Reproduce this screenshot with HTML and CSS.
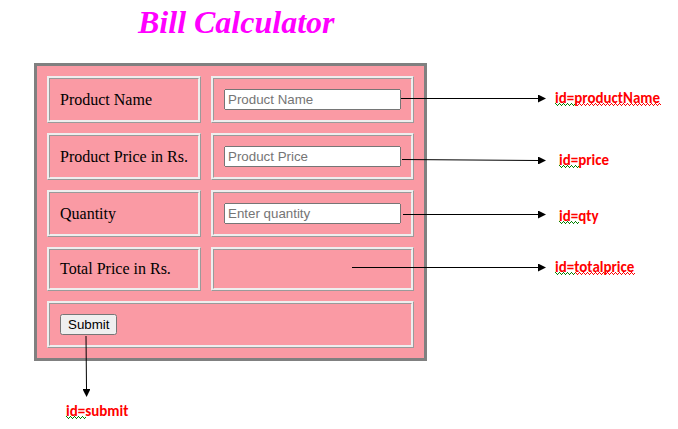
FILE: index.html
```html
<!DOCTYPE html>
<html lang="en">
<head>
<meta charset="utf-8">
<title>Bill Calculator</title>
<link rel="stylesheet" href="styles.css">
</head>
<body>
<main class="page">
  <h1 class="title">Bill Calculator</h1>
  <div class="diagram">
    <form class="bill">
      <table class="bill-table">
        <tr><td><label for="productName">Product Name</label></td><td><input type="text" id="productName" placeholder="Product Name"></td></tr>
        <tr><td><label for="price">Product Price in Rs.</label></td><td><input type="text" id="price" placeholder="Product Price"></td></tr>
        <tr><td><label for="qty">Quantity</label></td><td><input type="text" id="qty" placeholder="Enter quantity"></td></tr>
        <tr><td>Total Price in Rs.</td><td id="totalprice"></td></tr>
        <tr><td colspan="2"><button type="button" id="submit">Submit</button></td></tr>
      </table>
    </form>
    <div class="notes">
      <span class="note">id=productName</span>
      <span class="note note-inset">id=price</span>
      <span class="note note-inset">id=qty</span>
      <span class="note">id=totalprice</span>
    </div>
    <span class="note note-submit">id=submit</span>
    <svg class="arrows" width="644" height="366" viewBox="34 63 644 366" aria-hidden="true">
      <defs>
        <marker id="head" markerUnits="userSpaceOnUse" markerWidth="8" markerHeight="8" refX="0" refY="4" orient="auto"><path d="M0 0L8 4L0 8Z"/></marker>
        <pattern id="green" width="4" height="3" patternUnits="userSpaceOnUse"><path d="M0 0h1v1h-1zM1 1h1v1h-1zM2 2h1v1h-1zM3 1h1v1h-1z" class="wave-green"/></pattern>
        <pattern id="red" width="4" height="3" patternUnits="userSpaceOnUse"><path d="M0 0h1v1h-1zM1 1h1v1h-1zM2 2h1v1h-1zM3 1h1v1h-1z" class="wave-red"/></pattern>
        <rect id="short-wave" width="20" height="3" fill="url(#green)"/>
      </defs>
      <g class="lines">
        <path d="M401 98.5H538"/>
        <path d="M402 159.5L538 160.5"/>
        <path d="M403 214.5H538"/>
        <path d="M352 267.5H538"/>
        <path d="M86 336L86.5 389"/>
      </g>
      <use href="#short-wave" transform="translate(555 103)"/>
      <use href="#short-wave" transform="translate(559 165)"/>
      <use href="#short-wave" transform="translate(559 221)"/>
      <use href="#short-wave" transform="translate(555 272)"/>
      <use href="#short-wave" transform="translate(66 416)"/>
      <rect width="86" height="3" fill="url(#red)" transform="translate(575 103)"/>
      <rect width="60" height="3" fill="url(#red)" transform="translate(575 272)"/>
    </svg>
  </div>
</main>
</body>
</html>
```
FILE: styles.css
```css
body {
  margin: 0;
  background: #fff;
  font: 16px "Liberation Serif", serif;
  color: #000;
}

.page {
  padding: 4px 0 0 34px;
}

.title {
  margin: 0 0 22px;
  padding-left: 104px;
  font-size: 32px;
  line-height: 37px;
  font-style: italic;
  color: #f0f;
}

.diagram {
  position: relative;
  display: grid;
  grid-template-columns: max-content 1fr;
  column-gap: 128px;
}

.bill-table {
  border: 3px solid #808080;
  border-spacing: 10px;
  background: #fa9aa4;
}

.bill-table td {
  border: 3px ridge #eee;
  padding: 10px;
}

.bill-table input,
.bill-table button {
  display: block;
  box-sizing: border-box;
  height: 21px;
  margin: 0;
  font-family: "Liberation Sans", sans-serif;
}

.bill-table input {
  width: 177px;
  padding: 1px 2px;
}

.notes {
  display: grid;
  grid-template-rows: 62px 56px 51px 20px;
  align-content: start;
  padding-top: 25px;
}

.note {
  font: bold 15px/20px Carlito, Lato, sans-serif;
  color: #f00;
}

.note-inset {
  padding-left: 4px;
}

.note-submit {
  grid-column: 1;
  margin-top: 40px;
  padding-left: 32px;
}

.arrows {
  position: absolute;
  top: 0;
  left: 0;
  pointer-events: none;
}

.lines path {
  fill: none;
  stroke: #000;
  marker-end: url(#head);
}

.wave-green {
  fill: #008000;
}

.wave-red {
  fill: #f00;
}
```
